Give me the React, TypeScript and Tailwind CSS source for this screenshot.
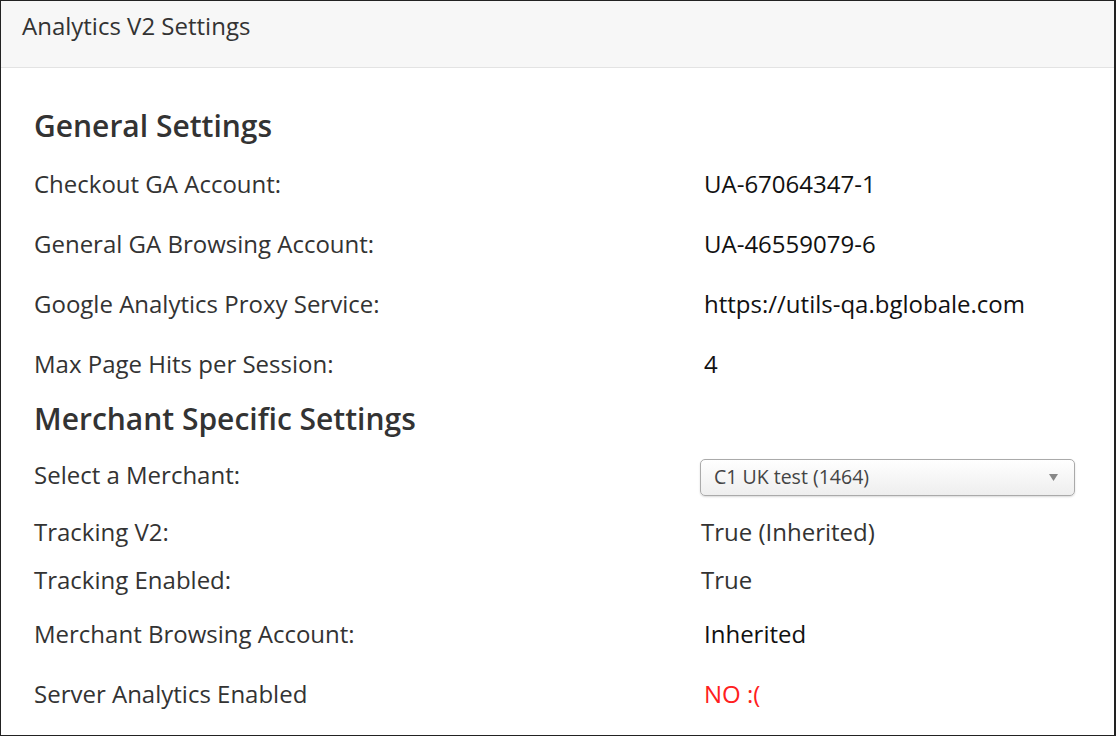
import React from "react";

const Row = ({ label, children, h, mt = "" }: { label: string; children: React.ReactNode; h: string; mt?: string }) => (
  <div className={`grid grid-cols-[666px_1fr] items-center ${h} ${mt}`}>
    <div className="text-[24px] leading-[32px] text-[#333]">{label}</div>
    <div>{children}</div>
  </div>
);

export default function App() {
  return (
    <div className="w-[1116px] h-[736px] border border-[#222] border-r-2 bg-white overflow-hidden" style={{ fontFamily: '"Open Sans", sans-serif' }}>
      <div className="h-[67px] bg-[#f7f7f7] border-b border-[#e3e3e3] pl-[21px] pt-[8px]">
        <div className="text-[24px] leading-[34px] text-[#333]">Analytics V2 Settings</div>
      </div>
      <div className="pl-[33px] pr-[40px]">
        <div className="h-[40px] mt-[37px] flex items-center text-[30px] font-semibold text-[#333]">General Settings</div>
        <Row label="Checkout GA Account:" h="h-[60px]" mt="mt-[9px]">
          <span className="pl-[4px] text-[24px] text-[#111]">UA-67064347-1</span>
        </Row>
        <Row label="General GA Browsing Account:" h="h-[60px]">
          <span className="pl-[4px] text-[24px] text-[#111]">UA-46559079-6</span>
        </Row>
        <Row label="Google Analytics Proxy Service:" h="h-[60px]">
          <span className="pl-[4px] text-[24px] text-[#111]">https://utils-qa.bglobale.com</span>
        </Row>
        <Row label="Max Page Hits per Session:" h="h-[60px]">
          <span className="pl-[4px] text-[24px] text-[#111]">4</span>
        </Row>
        <div className="h-[40px] mt-[4px] flex items-center text-[30px] font-semibold text-[#333]">Merchant Specific Settings</div>
        <Row label="Select a Merchant:" h="h-[44px]" mt="mt-[15px]">
          <div className="w-[375px] h-[37px] mt-[4px] rounded-[5px] border border-[#aaa] bg-gradient-to-b from-white to-[#eee] shadow-[0_1px_2px_rgba(0,0,0,0.15)] flex items-center justify-between pl-[13px] pr-[16px]">
            <span className="text-[19.5px] text-[#444]">C1 UK test (1464)</span>
            <svg width="9" height="7" viewBox="0 0 9 7"><path d="M0 0 L9 0 L4.5 7 Z" fill="#888" /></svg>
          </div>
        </Row>
        <Row label="Tracking V2:" h="h-[48px]" mt="mt-[11px]">
          <span className="pl-[1px] text-[24px] text-[#333]">True (Inherited)</span>
        </Row>
        <Row label="Tracking Enabled:" h="h-[48px]">
          <span className="pl-[1px] text-[24px] text-[#333]">True</span>
        </Row>
        <Row label="Merchant Browsing Account:" h="h-[60px]">
          <span className="pl-[4px] text-[24px] text-[#111]">Inherited</span>
        </Row>
        <Row label="Server Analytics Enabled" h="h-[60px]">
          <span className="pl-[4px] text-[24px] text-[#ff2020]">NO :(</span>
        </Row>
      </div>
    </div>
  );
}
